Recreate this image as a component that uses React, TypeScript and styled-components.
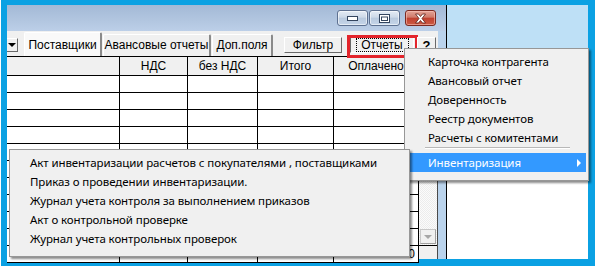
import React from "react";
import styled, { createGlobalStyle } from "styled-components";

const GlobalStyle = createGlobalStyle`
  html, body {
    margin: 0;
    padding: 0;
    background: #fff;
  }
  body {
    width: 595px;
    height: 266px;
    overflow: hidden;
    font-family: "Liberation Sans", Arial, sans-serif;
  }
`;

const Screen = styled.div`
  position: relative;
  width: 595px;
  height: 266px;
  box-sizing: border-box;
  border-left: 1px solid #fff;
  padding: 5px 7px 7px 6px;
  background: #0ba1e3;
  display: flex;
  overflow: hidden;
`;

const Window = styled.div`
  width: 440px;
  flex: none;
  display: flex;
  flex-direction: column;
  box-sizing: border-box;
  border-right: 1px solid #000;
  background: #bad3ec;
`;

const TitleBar = styled.div`
  height: 26px;
  flex: none;
  display: flex;
  justify-content: flex-end;
  align-items: flex-start;
  padding: 5px 10px 0 0;
  box-sizing: border-box;
  background: linear-gradient(180deg, #a3b9d6 0%, #b2c6e0 60%, #bccfe8 100%);
`;

const CaptionButton = styled.div<{ $close?: boolean; $gap?: number }>`
  width: 31px;
  height: 16px;
  box-sizing: border-box;
  margin-left: ${(p) => p.$gap ?? 1}px;
  border: 1px solid ${(p) => (p.$close ? "#7a2a22" : "#5e7191")};
  border-radius: 3px;
  display: flex;
  align-items: center;
  justify-content: center;
  box-shadow: inset 0 0 0 1px ${(p) => (p.$close ? "rgba(255,200,190,0.55)" : "rgba(255,255,255,0.55)")};
  background: ${(p) =>
    p.$close
      ? "linear-gradient(180deg, #e3a497 0%, #d07a6b 45%, #c0402f 50%, #cc5b45 100%)"
      : "linear-gradient(180deg, #e4ebf4 0%, #cdd9e8 45%, #b8c9de 50%, #c5d5e9 100%)"};
`;

const Body = styled.div`
  flex: 1;
  display: flex;
  min-height: 0;
`;

const Content = styled.div`
  width: 431px;
  flex: none;
  display: flex;
  flex-direction: column;
  background: #f0f0f0;
`;

const TabRow = styled.div`
  height: 25px;
  flex: none;
  display: flex;
  align-items: flex-start;
  background: #f0f0f0;
  font-size: 12px;
  color: #000;
`;

const ComboArrow = styled.div`
  width: 11px;
  height: 14px;
  margin-top: 7px;
  box-sizing: border-box;
  border-top: 1px solid #fff;
  border-right: 1px solid #696969;
  border-bottom: 1px solid #696969;
  background: #f0f0f0;
  display: flex;
  align-items: center;
  justify-content: center;
  &::after {
    content: "";
    border-left: 4px solid transparent;
    border-right: 4px solid transparent;
    border-top: 4px solid #000;
  }
`;

const Tab = styled.div<{ $active?: boolean; $width: number }>`
  width: ${(p) => p.$width}px;
  height: ${(p) => (p.$active ? 24 : 22)}px;
  margin-top: ${(p) => (p.$active ? 1 : 3)}px;
  margin-left: ${(p) => (p.$active ? 6 : 1)}px;
  box-sizing: border-box;
  border-left: 1px solid #fff;
  border-top: 1px solid #fff;
  border-right: 2px solid #8a8a8a;
  border-radius: 2px 2px 0 0;
  background: ${(p) => (p.$active ? "#f9f9f9" : "#f0f0f0")};
  display: flex;
  align-items: center;
  justify-content: center;
  padding-bottom: ${(p) => (p.$active ? 0 : 2)}px;
  white-space: nowrap;
`;

const Button = styled.div<{ $width: number; $gap: number; $pressed?: boolean; $bold?: boolean }>`
  position: relative;
  width: ${(p) => p.$width}px;
  height: 16px;
  margin-top: 6px;
  margin-left: ${(p) => p.$gap}px;
  box-sizing: border-box;
  border-top: 1px solid ${(p) => (p.$pressed ? "#696969" : "#fff")};
  border-left: 1px solid ${(p) => (p.$pressed ? "#696969" : "#fff")};
  border-right: 1px solid ${(p) => (p.$pressed ? "#fff" : "#696969")};
  border-bottom: 1px solid ${(p) => (p.$pressed ? "#fff" : "#696969")};
  background: #f0f0f0;
  display: flex;
  align-items: center;
  justify-content: center;
  font-weight: ${(p) => (p.$bold ? 700 : 400)};
  font-size: ${(p) => (p.$bold ? 13 : 12)}px;
`;

const FocusLabel = styled.span`
  border: 1px dotted #000;
  padding: 0 5px 0 4px;
  margin-left: 1px;
  line-height: 12px;
`;

const Highlight = styled.div`
  position: absolute;
  left: -4px;
  top: -3px;
  right: -5px;
  bottom: -6px;
  border: 3px solid #e3242b;
  pointer-events: none;
`;

const Grid = styled.div`
  flex: 1;
  display: flex;
  border-top: 1px solid #000;
  min-height: 0;
`;

const Table = styled.div`
  width: 412px;
  flex: none;
  display: grid;
  grid-template-columns: 113px 68px 70px 76px 85px;
  grid-auto-rows: 17px;
  grid-template-rows: 19px;
  background: #fff;
  font-size: 12px;
`;

const Cell = styled.div<{ $head?: boolean; $right?: boolean }>`
  box-sizing: border-box;
  border-right: 1px solid #000;
  border-bottom: 1px solid #000;
  background: ${(p) => (p.$head ? "#f0f0f0" : "#fff")};
  display: flex;
  align-items: center;
  justify-content: ${(p) => (p.$right ? "flex-end" : "center")};
  padding-right: ${(p) => (p.$right ? 3 : 0)}px;
  white-space: nowrap;
  overflow: hidden;
`;

const ScrollBar = styled.div`
  width: 19px;
  flex: none;
  display: flex;
  flex-direction: column;
  box-sizing: border-box;
  border-right: 1px solid #4a4a4a;
`;

const ScrollHead = styled.div`
  height: 19px;
  flex: none;
  box-sizing: border-box;
  border-bottom: 1px solid #000;
  background: #f0f0f0;
`;

const ScrollTrack = styled.div`
  height: 170px;
  flex: none;
  box-sizing: border-box;
  border-bottom: 1px solid #000;
  display: flex;
  flex-direction: column;
  justify-content: space-between;
  padding: 0 0 1px 0;
  background: repeating-conic-gradient(#ececec 0 25%, #fbfbfb 0 50%) 0 0 / 2px 2px;
`;

const ArrowButton = styled.div<{ $up?: boolean }>`
  width: 16px;
  height: 15px;
  margin-left: 1px;
  box-sizing: border-box;
  border: 1px solid #c8c8c8;
  border-right-color: #a0a0a0;
  border-bottom-color: #a0a0a0;
  background: #f0f0f0;
  display: flex;
  align-items: center;
  justify-content: center;
  &::after {
    content: "";
    border-left: 4px solid transparent;
    border-right: 4px solid transparent;
    ${(p) => (p.$up ? "border-bottom" : "border-top")}: 4px solid #a6a6a6;
  }
`;

const ScrollFoot = styled.div`
  flex: 1;
  background: #f0f0f0;
`;

const RightPane = styled.div`
  flex: 1;
  display: flex;
  flex-direction: column;
  background: #fff;
`;

const PaneTop = styled.div`
  height: 43px;
  background: #bee0f6;
`;

const Menu = styled.div<{ $left: number; $top: number; $width: number; $z: number }>`
  position: absolute;
  left: ${(p) => p.$left}px;
  top: ${(p) => p.$top}px;
  width: ${(p) => p.$width}px;
  z-index: ${(p) => p.$z};
  box-sizing: border-box;
  padding: 3px 2px 8px 2px;
  border: 1px solid #979797;
  background: #f0f0f0;
  box-shadow: 2px 2px 2px rgba(0, 0, 0, 0.45);
  font-family: "Noto Sans", "Open Sans", sans-serif;
  font-size: 11.5px;
  letter-spacing: -0.1px;
  color: #000;
`;

const MenuItem = styled.div<{ $active?: boolean; $indent?: number }>`
  position: relative;
  height: 19px;
  line-height: 19px;
  padding-left: ${(p) => p.$indent ?? 21}px;
  white-space: nowrap;
  background: ${(p) => (p.$active ? "#3399ff" : "transparent")};
  color: ${(p) => (p.$active ? "#fff" : "#000")};
`;

const SubArrow = styled.span`
  position: absolute;
  right: 5px;
  top: 6px;
  border-top: 4px solid transparent;
  border-bottom: 4px solid transparent;
  border-left: 4px solid #fff;
`;

const Separator = styled.div`
  margin: 0 16px 4px 18px;
  height: 0;
  border-top: 1px solid #b8b8b8;
  border-bottom: 1px solid #fff;
`;

const columns = ["", "НДС", "без НДС", "Итого", "Оплачено"];
const reportItems = [
  "Карточка контрагента",
  "Авансовый отчет",
  "Доверенность",
  "Реестр документов",
  "Расчеты с комитентами",
];
const inventoryItems = [
  "Акт инвентаризации расчетов с покупателями , поставщиками",
  "Приказ о проведении инвентаризации.",
  "Журнал учета контроля за выполнением приказов",
  "Акт о контрольной проверке",
  "Журнал учета контрольных проверок",
];

const MinimizeIcon = () => (
  <svg width="11" height="5" viewBox="0 0 11 5">
    <rect x="0.5" y="0.5" width="10" height="4" fill="#fff" stroke="#34455f" />
  </svg>
);

const MaximizeIcon = () => (
  <svg width="11" height="9" viewBox="0 0 11 9">
    <rect x="0.5" y="0.5" width="10" height="8" fill="#fff" stroke="#34455f" />
    <rect x="2.5" y="3" width="6" height="3.5" fill="#fff" stroke="#34455f" />
  </svg>
);

const CloseIcon = () => (
  <svg width="13" height="11" viewBox="0 0 13 11">
    <path
      d="M1.5 1 L4.5 1 L6.5 3.5 L8.5 1 L11.5 1 L8 5.5 L11.5 10 L8.5 10 L6.5 7.5 L4.5 10 L1.5 10 L5 5.5 Z"
      fill="#fff"
      stroke="#5a1c14"
      strokeWidth="0.8"
      strokeLinejoin="round"
    />
  </svg>
);

export default function App() {
  const rows = Array.from({ length: 10 });
  return (
    <>
      <GlobalStyle />
      <Screen>
        <Window>
          <TitleBar>
            <CaptionButton>
              <MinimizeIcon />
            </CaptionButton>
            <CaptionButton $gap={1}>
              <MaximizeIcon />
            </CaptionButton>
            <CaptionButton $close $gap={5}>
              <CloseIcon />
            </CaptionButton>
          </TitleBar>
          <Body>
            <Content>
              <TabRow>
                <ComboArrow />
                <Tab $active $width={78}>Поставщики</Tab>
                <Tab $width={108}>Авансовые отчеты</Tab>
                <Tab $width={61}>Доп.поля</Tab>
                <Button $width={58} $gap={11}>Фильтр</Button>
                <Button $width={64} $gap={8} $pressed>
                  <FocusLabel>Отчеты</FocusLabel>
                  <Highlight />
                </Button>
                <Button $width={19} $gap={3} $bold>?</Button>
              </TabRow>
              <Grid>
                <Table>
                  {columns.map((c, i) => (
                    <Cell key={`h${i}`} $head>
                      {c}
                    </Cell>
                  ))}
                  {rows.map((_, r) =>
                    columns.map((_, c) => <Cell key={`r${r}c${c}`} />)
                  )}
                  {columns.map((_, c) => (
                    <Cell key={`f${c}`} $right>
                      {c === 4 ? "0" : ""}
                    </Cell>
                  ))}
                </Table>
                <ScrollBar>
                  <ScrollHead />
                  <ScrollTrack>
                    <ArrowButton $up />
                    <ArrowButton />
                  </ScrollTrack>
                  <ScrollFoot />
                </ScrollBar>
              </Grid>
            </Content>
          </Body>
        </Window>
        <RightPane>
          <PaneTop />
        </RightPane>

        <Menu $left={403} $top={48} $width={185} $z={2}>
          {reportItems.map((t) => (
            <MenuItem key={t}>{t}</MenuItem>
          ))}
          <Separator />
          <MenuItem $active>
            Инвентаризация
            <SubArrow />
          </MenuItem>
        </Menu>

        <Menu $left={8} $top={149} $width={401} $z={3}>
          {inventoryItems.map((t) => (
            <MenuItem key={t} $indent={18}>
              {t}
            </MenuItem>
          ))}
        </Menu>
      </Screen>
    </>
  );
}
